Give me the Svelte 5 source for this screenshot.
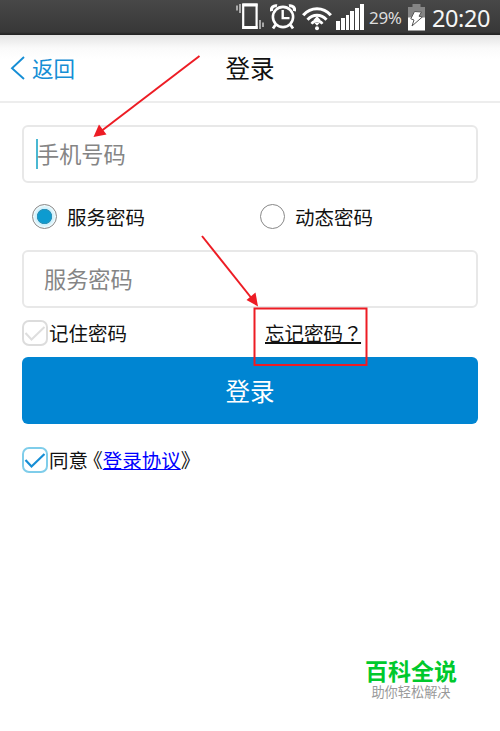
<script>
  let phone = $state('');
  let password = $state('');
  let mode = $state('service');
  let remember = $state(false);
  let agree = $state(true);
  const modes = [
    { id: 'service', label: '服务密码' },
    { id: 'dynamic', label: '动态密码' }
  ];
  const bars = [9.5, 12, 15.5, 19, 22.5, 26];
</script>

<div class="screen">
  <div class="status">
    <svg class="vibrate" width="28" height="28" viewBox="0 0 28 28" fill="none" stroke="#fff">
      <path d="M7.2 2.7H20.6V25.9H7.2Z" stroke-width="2.200" />
      <path d="M6.500 3H21.500M6.500 25.500H21.500" stroke-width="3" />
      <path d="M1 3.5V8.500M4 2V11M24 18V27M27 20.500V25" stroke-width="1.5" stroke="#ccc" />
    </svg>
    <svg class="clock" width="26" height="26" viewBox="0 0 26 26" fill="none" stroke="#fff">
      <circle cx="13" cy="13" r="10.1" stroke-width="2.6" />
      <path d="M12.7 6V14.1H19.5" stroke-width="2.4" />
      <path d="M1.6 7.2C.8 3.600 3.6 1.200 7 1.9M24.4 7.2C25.2 3.600 22.4 1.200 19 1.9" stroke-width="3.2" />
      <path d="M5.5 20.8L3 24.5M20.5 20.8L23 24.5" stroke-width="2.8" />
    </svg>
    <svg class="wifi" width="30" height="24" viewBox="0 0 30 24" fill="none" stroke="#fff">
      <path d="M1.2 8.2C9-.4 21-.4 28.8 8.2" stroke-width="3.2" />
      <path d="M5.5 12.7C11 6.8 19 6.8 24.5 12.7" stroke-width="3" />
      <path d="M9.5 16.8C12.8 12.6 17.2 12.6 20.5 16.8" stroke-width="2.6" />
      <circle cx="15" cy="21.3" r="2" fill="#fff" stroke="none" />
      <path d="M15 9L11.500 13H18.500ZM15 18.800L12 15.500H18Z" fill="#fff" stroke="none" />
    </svg>
    <div class="signal">
      {#each bars as h}<i style:height="{h}px"></i>{/each}
    </div>
    <span class="percent">29%</span>
    <svg class="battery" width="17" height="27" viewBox="0 0 17 27">
      <path d="M4.5 0H12.5V3H17V14H0V3H4.5Z" fill="#858585" />
      <path d="M0 13.5H17V26.5H0Z" fill="#fff" />
      <path d="M6.5 7.5L13.5 8L11 12.2L14.3 13L4 22L6 16L2.8 14.8Z" fill="#fff" stroke="#555" stroke-width="1" />
    </svg>
    <span class="time">20:20</span>
  </div>

  <header>
    <a class="back" href="#back">
      <svg width="15" height="24" viewBox="0 0 15 24" fill="none" stroke="#168ed5" stroke-width="1.9"><path d="M14 1L2 12.2L14 23" /></svg>
      <span>返回</span>
    </a>
    <h1>登录</h1>
  </header>

  <main>
    <div class="field first">
      <span class="caret"></span>
      <input type="text" placeholder="手机号码" bind:value={phone} />
    </div>
    <div class="modes">
      {#each modes as m}
        <button class="mode" onclick={() => (mode = m.id)}>
          <span class="radio" class:on={mode === m.id}></span>
          <span>{m.label}</span>
        </button>
      {/each}
    </div>
    <div class="field second">
      <input type="password" placeholder="服务密码" bind:value={password} />
    </div>
    <div class="options">
      <button class="remember" onclick={() => (remember = !remember)}>
        <span class="check" class:on={remember}>
          <svg width="22" height="20" viewBox="0 0 22 20" fill="none"><path d="M1.5 10L7.5 16.500L20.500 4" /></svg>
        </span>
        <span>记住密码</span>
      </button>
      <a class="forgot" href="#forgot">忘记密码<span class="mark">？</span></a>
    </div>
    <button class="submit">登录</button>
    <div class="agree">
      <button class="check" class:on={agree} aria-label="同意" onclick={() => (agree = !agree)}>
        <svg width="22" height="20" viewBox="0 0 22 20" fill="none"><path d="M1.5 10L7.5 16.500L20.500 4" /></svg>
      </button>
      <span class="terms">同意<span class="open">《</span><a href="#terms">登录协议</a><span class="close">》</span></span>
    </div>
  </main>

  <svg class="notes" width="500" height="731" viewBox="0 0 500 731" fill="none" stroke="#ed1c24" stroke-width="2">
    <path d="M199.5 56L102 130.500" />
    <path d="M93.500 137L99 124.500L106.500 134.500Z" fill="#ed1c24" stroke="none" />
    <path d="M202 236L251 297.500" />
    <path d="M258 306.500L246.500 300L255.500 292.500Z" fill="#ed1c24" stroke="none" />
    <rect x="254.500" y="308.500" width="112" height="56.500" />
  </svg>

  <div class="brand">
    <strong>百科全说</strong>
    <span>助你轻松解决</span>
  </div>
</div>

<style>
  :global(body) { margin: 0; background: #fff; }
  .screen {
    position: relative;
    width: 500px;
    height: 731px;
    overflow: hidden;
    box-sizing: border-box;
    background: #fff;
    color: #111;
    font-family: "Noto Sans CJK SC", sans-serif;
  }
  button {
    padding: 0;
    border: 0;
    background: none;
    color: inherit;
    font: inherit;
  }
  .status {
    display: flex;
    align-items: flex-start;
    box-sizing: border-box;
    height: 35px;
    padding-left: 236px;
    background: linear-gradient(#484848, #383838 32px, #252525 34px);
    color: #f5f5f5;
    font-family: "Noto Sans", sans-serif;
    white-space: nowrap;
  }
  .status svg { flex: none; }
  .vibrate { margin-top: 2px; }
  .clock { margin: 4px 0 0 6px; }
  .wifi { margin: 7px 0 0 6px; }
  .signal {
    display: flex;
    align-items: flex-end;
    gap: 1px;
    width: 28px;
    height: 26px;
    margin: 4px 0 0 4px;
  }
  .signal i { flex: 1; background: #fff; }
  .percent {
    width: 39px;
    margin-left: 5px;
    color: #ddd;
    font-size: 17px;
    letter-spacing: -0.3px;
    line-height: 36px;
  }
  .battery { margin-top: 4px; }
  .time {
    margin-left: 7px;
    font-size: 23.500px;
    letter-spacing: -0.4px;
    line-height: 36px;
  }

  header {
    display: grid;
    grid-template-columns: 1fr auto 1fr;
    align-items: center;
    box-sizing: border-box;
    height: 68px;
    border-bottom: 2px solid #ededed;
    background: linear-gradient(#e4e4e4, #fafafa 13px, #fff 24px);
  }
  .back {
    display: flex;
    align-items: center;
    gap: 7px;
    padding-left: 10px;
    color: #168ed5;
    font-size: 21.500px;
    line-height: 32px;
    text-decoration: none;
  }
  h1 { margin: 0; font-size: 24.500px; font-weight: 400; line-height: 36px; }

  main { display: flex; flex-direction: column; padding: 22px 22px 0; }
  .field {
    display: flex;
    align-items: center;
    box-sizing: border-box;
    height: 58px;
    border: 2px solid #e8e8e8;
    border-radius: 6px;
  }
  .field.first { padding-left: 12px; }
  .field.second { padding-left: 20px; }
  .caret { flex: none; width: 2px; height: 30px; background: #4ab8d2; }
  input {
    flex: 1;
    min-width: 0;
    padding: 0 0 2px;
    border: 0;
    outline: 0;
    background: none;
    font: 22.200px/34px "Noto Sans CJK SC", sans-serif;
  }
  .first input { margin-left: -1px; }
  input::placeholder { color: #858585; opacity: 1; }
  .modes { display: flex; height: 67px; padding-left: 10px; }
  .mode {
    display: flex;
    flex: none;
    align-items: center;
    gap: 10px;
    width: 228px;
    font-size: 19.500px;
  }
  .mode + .mode { width: 200px; }
  .radio {
    box-sizing: border-box;
    width: 25px;
    height: 25px;
    border: 1px solid #888;
    border-radius: 50%;
  }
  .radio.on { background: radial-gradient(circle, #0d9bd0 6px, #2f93b8 7.300px, #cfeefa 8px, #d9f4fc 9.500px, #fff 12px); }
  .options {
    display: flex;
    align-items: center;
    height: 49px;
    font-size: 19.500px;
  }
  .remember, .agree { display: flex; align-items: center; gap: 1px; }
  .remember { width: 243px; }
  .check {
    display: flex;
    align-items: center;
    justify-content: center;
    box-sizing: border-box;
    width: 26px;
    height: 26px;
    border: 2px solid #dcdcdc;
    border-radius: 7px;
  }
  .check svg { flex: none; }
  .check path { stroke: #dedede; stroke-width: 2; }
  .check.on { border-color: #7fcdea; }
  .check.on path { stroke: #168ed5; stroke-width: 2.200; }
  .forgot {
    color: #111;
    line-height: 29px;
    text-decoration: underline;
    text-decoration-thickness: 2px;
    text-decoration-skip-ink: none;
    text-underline-offset: 1px;
  }
  .mark { font-family: "Noto Sans CJK TC", sans-serif; letter-spacing: -1.500px; }
  .submit {
    height: 67px;
    border-radius: 6px;
    background: #0085d2;
    color: #fff;
    font-size: 24.500px;
  }
  .agree { height: 72px; font-size: 19.500px; white-space: nowrap; }
  .terms { margin-top: -1px; }
  .open { margin-left: 5px; }
  .open, .close { font-feature-settings: "halt"; }
  .agree a {
    color: #00f;
    text-decoration-thickness: 1px;
    text-decoration-skip-ink: none;
    text-underline-offset: 1px;
  }
  .notes { position: absolute; inset: 0; pointer-events: none; }
  .brand {
    position: absolute;
    left: 365px;
    top: 653px;
    display: flex;
    flex-direction: column;
    align-items: center;
    width: 92px;
    white-space: nowrap;
  }
  .brand strong { color: #00c92c; font-size: 23px; line-height: 34px; }
  .brand span { margin-top: -3px; color: #999; font-size: 13.200px; line-height: 16px; }
</style>
